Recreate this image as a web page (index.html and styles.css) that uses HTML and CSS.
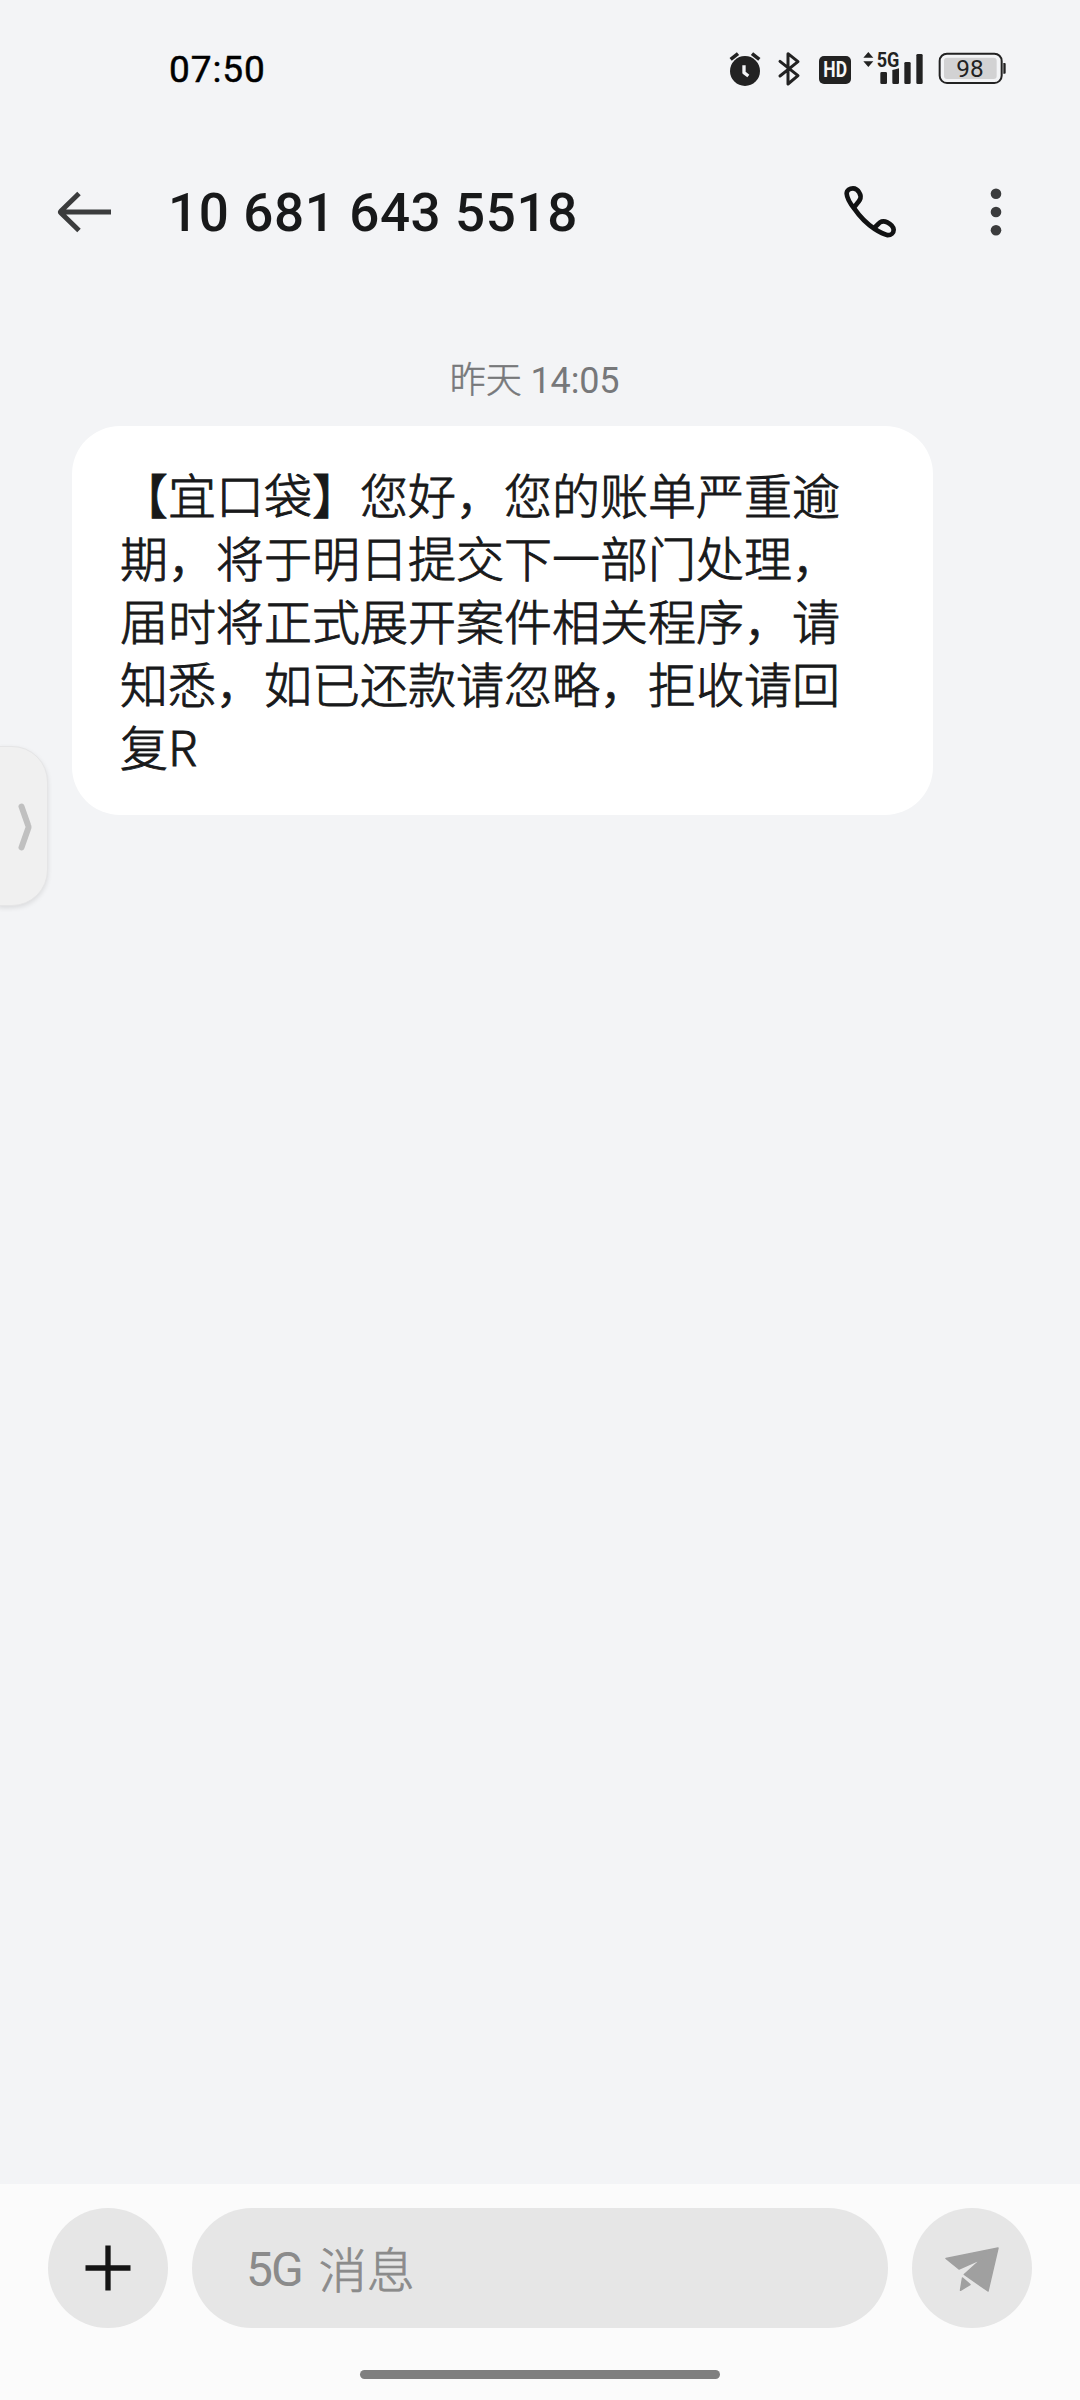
FILE: index.html
```html
<!DOCTYPE html>
<html lang="zh-CN">
<head>
<meta charset="utf-8">
<title>10 681 643 5518</title>
<link rel="stylesheet" href="styles.css">
</head>
<body>
<div class="phone">
  <div class="status">
    <span class="clock">07:50</span>
    <svg class="status-icons" viewBox="0 0 1020 240">
      <circle cx="135" cy="123" r="45"/>
      <path class="line w11" d="M92 88l22-17M178 88l-22-17"/>
      <path class="line w12 light" d="M132 106v22l13 10"/>
      <path class="line w10" d="M240 94l54 43-30 25V71l30 24-54 43"/>
      <rect x="357" y="78" width="96" height="84" rx="15"/>
      <text class="hd" x="370" y="142" textLength="71" lengthAdjust="spacingAndGlyphs">HD</text>
      <path d="M505 66l15 17h-30zM505 111l15-17h-30z"/>
      <text class="net" x="530" y="110" textLength="68" lengthAdjust="spacingAndGlyphs">5G</text>
      <path d="M541 130q0-4 4-4h12q4 0 4 4v28q0 4-4 4h-12q-4 0-4-4zM577 120q9-1 20-5v43q0 4-4 4h-12q-4 0-4-4z"/>
      <rect x="613" y="96" width="19" height="66" rx="4"/>
      <rect x="649" y="72" width="19" height="90" rx="4"/>
      <rect class="line w6" x="719" y="71" width="186" height="88" rx="22"/>
      <rect class="charge" x="732" y="83" width="158" height="64" rx="9"/>
      <path d="M910 99h4q3 0 3 3v26q0 3-3 3h-4z"/>
      <text class="percent" x="769" y="140" textLength="82" lengthAdjust="spacingAndGlyphs">98</text>
    </svg>
  </div>
  <header class="header">
    <svg class="back" viewBox="0 0 58 52"><path d="M56 26H6M24 7.500L6 25q-1 1 0 2L24 44.500"/></svg>
    <h1 class="title">10 681 643 5518</h1>
    <svg class="call" viewBox="0 0 180 180"><path d="M43 76C50 65 55 61 59 54C63 47 63 40 58 32C54 25 48 19 39 19C30 19 20 24 20 35C21 48 28 62 43 80C60 105 80 125 104 141C118 150 132 157 143 159.500C154 159.500 161 152 161 143C160 134 152 126 142 121C135 117.500 126 117 120 121C114 127 108 132 102 139"/></svg>
    <svg class="more" viewBox="0 0 12 52"><circle cx="6" cy="7.700" r="5.300"/><circle cx="6" cy="26" r="5.300"/><circle cx="6" cy="44.300" r="5.300"/></svg>
  </header>
  <main class="thread">
    <time class="stamp">昨天 <span class="hour">14:05</span></time>
    <p class="bubble">【宜口袋】您好，您的账单严重逾期，将于明日提交下一部门处理，届时将正式展开案件相关程序，请知悉，如已还款请忽略，拒收请回复R</p>
  </main>
  <footer class="footer">
    <div class="composer">
      <div class="round"><svg class="plus" viewBox="0 0 46 46"><path d="M23 .5v45M.5 23h45"/></svg></div>
      <div class="field"><span class="latin">5G</span><span class="hint">消息</span></div>
      <div class="round"><svg class="send" viewBox="0 0 120 120"><path d="M34 50.500L86 40 76 83 52.300 66.500 69.500 51 47 61zM50.500 70L58 76.500 48.500 82.300z"/></svg></div>
    </div>
    <div class="home"></div>
  </footer>
  <div class="drawer"><svg class="chevron" viewBox="0 0 14 48"><path d="M3.500 3.500l6.500 18.500q1 2 0 4L3.500 44.500"/></svg></div>
</div>
</body>
</html>
```
FILE: styles.css
```css
* { box-sizing: border-box; }

body {
  margin: 0;
  background: #f3f4f6;
  color: #18191a;
  font-family: Roboto, "Noto Sans CJK SC", sans-serif;
}

.phone {
  position: relative;
  display: flex;
  flex-direction: column;
  width: 1080px;
  height: 2400px;
  overflow: hidden;
}

.status {
  display: flex;
  justify-content: space-between;
  align-items: center;
  height: 140px;
  padding: 0 40px 0 168px;
}

.clock {
  margin-bottom: 2px;
  margin-left: 1px;
  color: #000;
  font-size: 37px;
  font-weight: 400;
  letter-spacing: .9px;
  -webkit-text-stroke: .5px #000;
}

.status-icons { width: 340px; height: 80px; fill: #222; }
.line { fill: none; stroke: #222; stroke-linecap: round; stroke-linejoin: round; }
.w6 { stroke-width: 6; }
.w10 { stroke-width: 9; }
.w11 { stroke-width: 11; stroke-linecap: butt; }
.w12 { stroke-width: 10; stroke-linecap: butt; }
.light { stroke: #f3f4f6; }
.charge { fill: #d2d2d3; }
.hd { fill: #f6f6f6; font-size: 64px; font-weight: 700; }
.net { font-size: 60px; font-weight: 700; }
.percent { font-size: 70px; }

.header {
  display: flex;
  align-items: center;
  height: 144px;
  padding-left: 55px;
}

.back { width: 58px; height: 52px; fill: none; stroke: #3b3c3d; stroke-width: 5; }

.title {
  width: 672px;
  margin: 2px 0 0 55px;
  font-size: 53px;
  font-weight: 500;
  letter-spacing: .6px;
  white-space: nowrap;
}

.call { width: 60px; height: 60px; fill: none; stroke: #111213; stroke-width: 14; stroke-linejoin: round; }
.more { width: 12px; height: 52px; margin-left: 90px; fill: #3b3c3d; }

.thread { flex: 1; padding: 74px 0 0 72px; }

.stamp {
  display: block;
  width: 925px;
  height: 68px;
  color: #77787a;
  font-size: 36px;
  font-weight: 300;
  line-height: 46px;
  text-align: center;
  -webkit-text-stroke: .5px #77787a;
}

.hour { font-weight: 400; letter-spacing: -.2px; -webkit-text-stroke: 0; }

.bubble {
  width: 861px;
  height: 389px;
  margin: 0;
  padding: 36px 48px;
  border-radius: 48px;
  background: #fff;
  color: #18191a;
  font-family: "Noto Sans CJK SC", sans-serif;
  font-size: 48px;
  font-weight: 300;
  line-height: 63.1px;
  -webkit-text-stroke: .9px #18191a;
}

.footer { height: 216px; background: #fbfbfb; }

.composer { display: flex; gap: 24px; padding: 24px 48px 0; }

.round {
  display: flex;
  align-items: center;
  justify-content: center;
  width: 120px;
  height: 120px;
  border-radius: 50%;
  background: #e6e6e6;
}

.plus { width: 46px; height: 46px; fill: none; stroke: #151515; stroke-width: 5.300; }
.send { width: 120px; height: 120px; fill: #a0a0a0; stroke: #a0a0a0; stroke-width: 1.500; stroke-linejoin: round; }

.field {
  display: flex;
  flex: 1;
  align-items: center;
  gap: 17px;
  height: 120px;
  padding-left: 54px;
  border-radius: 60px;
  background: #e6e6e6;
  color: #8b8b8b;
  font-size: 48px;
}

.latin { padding-top: 3px; letter-spacing: -2px; }
.hint { padding-bottom: 2px; font-weight: 300; -webkit-text-stroke: .7px #8b8b8b; }

.home {
  width: 360px;
  height: 9px;
  margin: 42px auto 0;
  border-radius: 5px;
  background: #7f7f7f;
}

.drawer {
  position: absolute;
  top: 746px;
  left: -2px;
  display: flex;
  align-items: center;
  justify-content: flex-end;
  width: 50px;
  height: 160px;
  padding: 2px 15px 0 0;
  border: 1px solid #e5e5e6;
  border-radius: 0 36px 36px 0;
  background: #f0f0f0;
  box-shadow: 0 2px 5px rgba(0, 0, 0, .1);
}

.chevron { width: 14px; height: 48px; fill: none; stroke: #c0c0c0; stroke-width: 6; stroke-linecap: round; }
```
